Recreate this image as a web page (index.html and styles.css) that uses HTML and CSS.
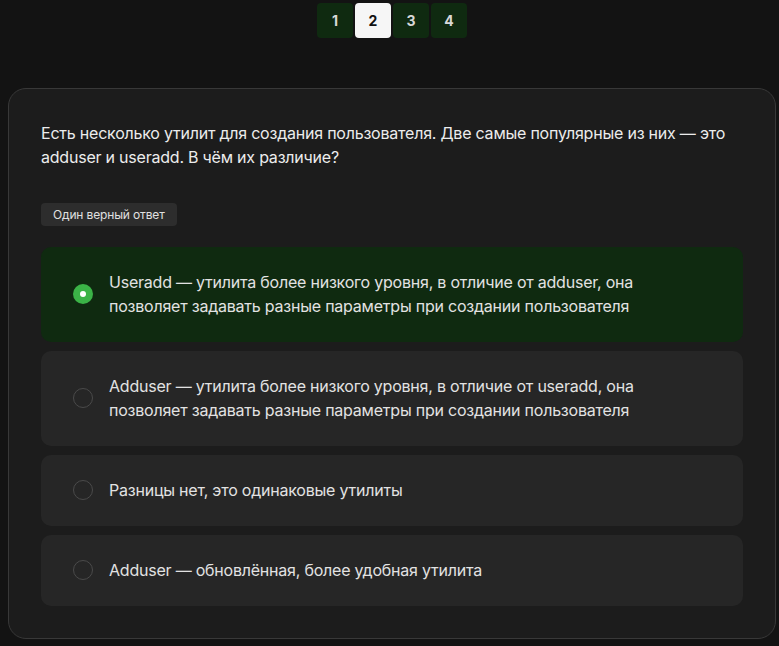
FILE: index.html
```html
<!DOCTYPE html>
<html lang="ru">
<head>
<meta charset="utf-8">
<link rel="stylesheet" href="styles.css">
</head>
<body>
<nav class="pager">
  <button class="page">1</button>
  <button class="page active">2</button>
  <button class="page">3</button>
  <button class="page">4</button>
</nav>
<section class="card">
  <p class="question">Есть несколько утилит для создания пользователя. Две самые популярные из них — это adduser и useradd. В чём их различие?</p>
  <span class="badge">Один верный ответ</span>
  <ul class="options">
    <li class="option selected"><span class="radio"></span><span class="label">Useradd — утилита более низкого уровня, в отличие от adduser, она позволяет задавать разные параметры при создании пользователя</span></li>
    <li class="option"><span class="radio"></span><span class="label">Adduser — утилита более низкого уровня, в отличие от useradd, она позволяет задавать разные параметры при создании пользователя</span></li>
    <li class="option"><span class="radio"></span><span class="label">Разницы нет, это одинаковые утилиты</span></li>
    <li class="option"><span class="radio"></span><span class="label">Adduser — обновлённая, более удобная утилита</span></li>
  </ul>
</section>
</body>
</html>
```
FILE: styles.css
```css
html, body {
  margin: 0;
  padding: 0;
  background: #131313;
  font-family: "Inter", "Liberation Sans", sans-serif;
  color: #e6e6e6;
}
.pager {
  display: flex;
  justify-content: center;
  gap: 2px;
  padding: 3px 0 0 5px;
  height: 35px;
}
.page {
  width: 36px;
  height: 35px;
  border: none;
  border-radius: 4px;
  background: #0f2a10;
  color: #d8d8d8;
  font: 700 14px "Inter", "Liberation Sans", sans-serif;
  padding: 0;
}
.page.active {
  background: #f6f6f6;
  color: #111;
}
.card {
  margin: 50px 3px 0 8px;
  box-sizing: border-box;
  width: 768px;
  height: 551px;
  background: #1c1c1c;
  border: 1px solid #383838;
  border-radius: 18px;
  padding: 32px 32px 32px 32px;
}
.question {
  margin: 0;
  font-size: 16px;
  line-height: 24px;
  letter-spacing: -0.22px;
  color: #ececec;
  max-width: 702px;
}
.badge {
  display: inline-block;
  margin-top: 34px;
  background: #2d2d2d;
  color: #e0e0e0;
  font-size: 12px;
  line-height: 23px;
  letter-spacing: -0.15px;
  padding: 0 12px;
  border-radius: 4px;
}
.options {
  list-style: none;
  margin: 21px 0 0 0;
  padding: 0;
  display: flex;
  flex-direction: column;
  gap: 9px;
}
.option {
  display: flex;
  align-items: center;
  gap: 16px;
  background: #262626;
  border-radius: 10px;
  padding: 23px 24px 24px 32px;
  font-size: 16px;
  line-height: 24px;
  letter-spacing: -0.22px;
  color: #e2e2e2;
}
.option.selected {
  background: #0f2a10;
}
.label {
  max-width: 560px;
}
.radio {
  flex: none;
  box-sizing: border-box;
  width: 20px;
  height: 20px;
  border-radius: 50%;
  border: 1.5px solid #4a4a4a;
}
.selected .radio {
  border: none;
  background: #3bb347;
  display: flex;
  align-items: center;
  justify-content: center;
}
.selected .radio::after {
  content: "";
  width: 6px;
  height: 6px;
  border-radius: 50%;
  background: #fff;
}
```
